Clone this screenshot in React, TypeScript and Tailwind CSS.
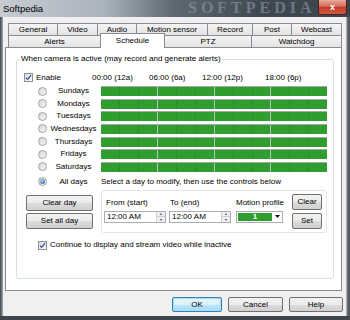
import React from "react";

const row1 = [
  ["General", "w-[49px]"],
  ["Video", "w-[40px]"],
  ["Audio", "w-[39px]"],
  ["Motion sensor", "w-[71px]"],
  ["Record", "w-[45px]"],
  ["Post", "w-[39px]"],
  ["Webcast", "w-[51px] border-r"],
];

const days = ["Sundays", "Mondays", "Tuesdays", "Wednesdays", "Thursdays", "Fridays", "Saturdays"];

const tabClass =
  "flex h-[12px] items-center justify-center border-l border-t border-[#898c95] bg-[linear-gradient(#f5f5f5,#e3e3e3)] text-[8px] leading-none";

const btnClass =
  "flex items-center justify-center rounded-[2px] border border-[#707070] bg-[linear-gradient(#f2f2f2,#ebebeb_50%,#dddddd_50%,#cfcfcf)] text-[8px] leading-none";

function CheckBox() {
  return (
    <span className="inline-flex h-[9px] w-[9px] shrink-0 items-center justify-center border border-[#8e8f8f] bg-[linear-gradient(135deg,#d9dbde,#fbfbfb)]">
      <svg viewBox="0 0 8 8" className="h-[7px] w-[7px]">
        <path d="M1.2 4.1 L3.1 6.1 L6.9 1.4" fill="none" stroke="#2c4d8f" strokeWidth="1.4" />
      </svg>
    </span>
  );
}

function Radio({ on }: { on?: boolean }) {
  return (
    <span className="inline-flex h-[9px] w-[9px] shrink-0 items-center justify-center rounded-full border border-[#a3a3a3] bg-[linear-gradient(135deg,#d4d4d4,#f9f9f9)]">
      {on ? (
        <span className="h-[5px] w-[5px] rounded-full bg-[radial-gradient(circle_at_35%_35%,#9fd6ff,#1a5a98)]" />
      ) : null}
    </span>
  );
}

function Bar() {
  return (
    <div className="ml-[4px] flex h-[10px] w-[226px] gap-[1px] border-t border-[#a6a6a6] bg-[#b9c2b9]">
      {[0, 1, 2, 3].map((i) => (
        <div
          key={i}
          className="flex-1 bg-[repeating-linear-gradient(to_right,#2f9e2f_0px,#2f9e2f_18px,#2a8e2a_18px,#2a8e2a_19px)]"
        />
      ))}
    </div>
  );
}

function TimeInput() {
  return (
    <div className="mt-[3px] flex h-[12px] w-[62px] items-center justify-between border border-[#abadb3] bg-white pl-[2px] text-[8px] leading-none">
      <span>12:00 AM</span>
      <div className="flex h-full w-[9px] flex-col border-l border-[#d0d0d0] bg-[#eceef2]">
        <div className="flex flex-1 items-center justify-center border-b border-[#d0d0d0]">
          <svg viewBox="0 0 4 3" className="h-[2px] w-[4px]">
            <path d="M0 3 L2 0 L4 3 Z" fill="#6d6d6d" />
          </svg>
        </div>
        <div className="flex flex-1 items-center justify-center">
          <svg viewBox="0 0 4 3" className="h-[2px] w-[4px]">
            <path d="M0 0 L4 0 L2 3 Z" fill="#6d6d6d" />
          </svg>
        </div>
      </div>
    </div>
  );
}

export default function App() {
  return (
    <div className="flex h-[320px] w-[350px] flex-col overflow-hidden bg-[#474d53] font-['Liberation_Sans',Arial,sans-serif] text-black">
      {/* title bar */}
      <div className="relative flex h-[17px] shrink-0 items-center overflow-hidden bg-[linear-gradient(to_right,#c6ccd2,#aab2ba_30%,#5d6770_50%,#3f4850_75%,#3c444c)] pl-[3px]">
        <span className="text-[9.5px] leading-none">Softpedia</span>
        <span className="pointer-events-none absolute left-[188px] top-0 font-['Liberation_Serif',serif] text-[16px] font-bold leading-none tracking-[4px] text-[#8e9aa7] opacity-60">
          SOFTPEDIA
        </span>
        <div className="relative z-10 ml-auto mr-[3px] flex h-[15px] w-[29px] items-center justify-center self-start rounded-b-[3px] border border-t-0 border-[#4a2222] bg-[linear-gradient(#e6a99c,#d46c5b_45%,#c23b28_52%,#cf5a43)] text-[9px] font-bold leading-none text-white">
          x
        </div>
      </div>

      <div className="flex flex-1">
        <div className="w-[3px] bg-[linear-gradient(to_right,#3d4247,#a3a9af)]" />
        <div className="flex w-[343px] flex-col bg-[#f0f0f0] pt-[6px]">
          {/* tabs */}
          <div className="ml-[2px] w-[337px]">
            <div className="flex pl-[3px]">
              {row1.map(([t, w]) => (
                <div key={t} className={`${tabClass} ${w}`}>
                  {t}
                </div>
              ))}
            </div>
            <div className="flex h-[12px] items-end pl-[3px]">
              <div className={`${tabClass} w-[92px]`}>Alerts</div>
              <div className="relative z-10 -mb-px flex h-[15px] w-[65px] items-center justify-center border-l border-t border-r border-[#898c95] bg-white pb-[1px] text-[8px] leading-none">
                Schedule
              </div>
              <div className={`${tabClass} w-[86px] border-l-0`}>PTZ</div>
              <div className={`${tabClass} w-[91px] border-r`}>Watchdog</div>
            </div>

            {/* panel */}
            <div className="h-[244px] border border-[#898c95] bg-white pt-[11px] pl-[10px]">
              <div className="relative h-[220px] w-[318px] rounded-[3px] border border-[#d5dfe5] text-[8px] leading-none">
                <span className="absolute left-[3px] top-[-5px] bg-white px-[1px]">
                  When camera is active (may record and generate alerts)
                </span>

                <div className="pt-[12px]">
                  <div className="flex h-[11px] items-center">
                    <div className="flex w-[75px] items-center pl-[7px]">
                      <CheckBox />
                      <span className="ml-[3px]">Enable</span>
                    </div>
                    <span className="w-[57px]">00:00 (12a)</span>
                    <span className="w-[53px]">06:00 (6a)</span>
                    <span className="w-[63px]">12:00 (12p)</span>
                    <span>18:00 (6p)</span>
                  </div>

                  <div className="mt-[3px] flex flex-col gap-[2.67px]">
                    {days.map((d) => (
                      <div key={d} className="flex h-[10px] items-center pl-[21px]">
                        <Radio />
                        <span className="ml-[3px] w-[47px] text-center">{d}</span>
                        <Bar />
                      </div>
                    ))}
                  </div>

                  <div className="mt-[5px] flex h-[10px] items-center pl-[21px]">
                    <Radio on />
                    <span className="ml-[3px] w-[47px] text-center">All days</span>
                    <span className="ml-[4px]">Select a day to modify, then use the controls below</span>
                  </div>

                  <div className="mt-[3px] flex">
                    <div className="flex flex-col pl-[9px] pt-[5px]">
                      <div className={`${btnClass} h-[16px] w-[67px]`}>Clear day</div>
                      <div className={`${btnClass} mt-[2px] h-[16px] w-[67px]`}>Set all day</div>
                    </div>
                    <div className="ml-[8px] flex h-[43px] w-[226px] rounded-[3px] border border-[#dfe5ea] pl-[2px]">
                      <div className="flex flex-col">
                        <span className="mt-[7px] h-[10px] pl-[2px] leading-[10px]">From (start)</span>
                        <TimeInput />
                      </div>
                      <div className="ml-[3px] flex flex-col">
                        <span className="mt-[7px] h-[10px] pl-[1px] leading-[10px]">To (end)</span>
                        <TimeInput />
                      </div>
                      <div className="ml-[5px] flex flex-col">
                        <span className="mt-[7px] h-[10px] leading-[10px]">Motion profile</span>
                        <div className="mt-[3px] flex h-[12px] w-[47px] items-center border border-[#abadb3] bg-white pl-[1px]">
                          <div className="flex h-[8px] w-[34px] items-center justify-center bg-[#2f9e2f] text-[8px] font-bold leading-none text-white">
                            1
                          </div>
                          <svg viewBox="0 0 5 3" className="ml-[3px] h-[3px] w-[5px]">
                            <path d="M0 0 L5 0 L2.5 3 Z" fill="#000" />
                          </svg>
                        </div>
                      </div>
                      <div className="ml-[8px] flex flex-col pt-[3px]">
                        <div className={`${btnClass} h-[16px] w-[30px]`}>Clear</div>
                        <div className={`${btnClass} mt-[3px] h-[16px] w-[30px]`}>Set</div>
                      </div>
                    </div>
                  </div>

                  <div className="mt-[8px] flex items-center pl-[21px]">
                    <CheckBox />
                    <span className="ml-[3px]">Continue to display and stream video while inactive</span>
                  </div>
                </div>
              </div>
            </div>
          </div>

          {/* dialog buttons */}
          <div className="mt-[6px] flex justify-end gap-[6px] pr-[3px]">
            <div className="flex h-[15px] w-[50px] items-center justify-center rounded-[2px] border border-[#3c7fb1] bg-[linear-gradient(#eaf6fd,#d9f0fc_50%,#bee6fd_50%,#a7d9f5)] text-[8px] leading-none shadow-[inset_0_0_0_1px_#9ce0fb]">
              OK
            </div>
            <div className={`${btnClass} h-[15px] w-[55px]`}>Cancel</div>
            <div className={`${btnClass} h-[15px] w-[54px]`}>Help</div>
          </div>
        </div>
        <div className="flex-1 bg-[linear-gradient(to_right,#cdd1d5,#60676e_40%,#4a5056)]" />
      </div>
      <div className="h-[4px] shrink-0 bg-[#3f454b]" />
    </div>
  );
}
